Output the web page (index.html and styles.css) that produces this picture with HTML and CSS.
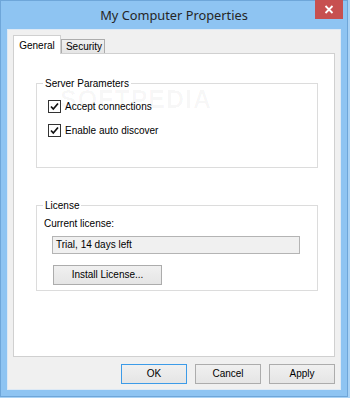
FILE: index.html
```html
<!DOCTYPE html>
<html>
<head>
<meta charset="utf-8">
<link rel="stylesheet" href="styles.css">
</head>
<body>
<div class="window">
  <div class="titlebar">
    <span class="title">My Computer Properties</span>
    <div class="close"><svg width="10" height="9" viewBox="0 0 10 9"><path d="M1.5 1 L8.5 8 M8.5 1 L1.5 8" stroke="#fff" stroke-width="1.8"/></svg></div>
  </div>
  <div class="client">
    <div class="tabs">
      <div class="tab active">General</div>
      <div class="tab">Security</div>
    </div>
    <div class="panel">
      <div class="watermark">SOFTPEDIA<sup>®</sup></div>
      <div class="group group-server">
        <div class="legend">Server Parameters</div>
        <div class="check-row">
          <span class="checkbox"><svg width="11" height="11" viewBox="0 0 11 11"><path d="M2 5.5 L4.3 8 L9 2.5" fill="none" stroke="#111" stroke-width="1.7"/></svg></span>
          <span class="check-label">Accept connections</span>
        </div>
        <div class="check-row second">
          <span class="checkbox"><svg width="11" height="11" viewBox="0 0 11 11"><path d="M2 5.5 L4.3 8 L9 2.5" fill="none" stroke="#111" stroke-width="1.7"/></svg></span>
          <span class="check-label">Enable auto discover</span>
        </div>
      </div>
      <div class="group group-license">
        <div class="legend">License</div>
        <div class="field-label">Current license:</div>
        <div class="textbox">Trial, 14 days left</div>
        <div class="btn install">Install License...</div>
      </div>
    </div>
    <div class="buttons">
      <div class="btn dlg default">OK</div>
      <div class="btn dlg">Cancel</div>
      <div class="btn dlg">Apply</div>
    </div>
  </div>
</div>
</body>
</html>
```

FILE: styles.css
```css
html, body {
  margin: 0;
  padding: 0;
  background: #a9d2f5;
  width: 350px;
  height: 398px;
  overflow: hidden;
}
.window {
  width: 346px;
  height: 395px;
  border: 1px solid #6ea6d9;
  background: #8ec4f2;
  font-family: "Liberation Sans", Arial, sans-serif;
  font-size: 10px;
  color: #000;
}
.titlebar {
  height: 28px;
  display: flex;
  align-items: flex-start;
  justify-content: center;
  position: relative;
}
.title {
  font-family: "Noto Sans", "Open Sans", sans-serif;
  font-size: 12.8px;
  line-height: 16px;
  margin-top: 6px;
  color: #262626;
}
.close {
  position: absolute;
  left: 314px;
  top: -1px;
  width: 28px;
  height: 19px;
  background: #c75050;
  display: flex;
  align-items: center;
  justify-content: center;
}
.client {
  margin-left: 6px;
  width: 322px;
  height: 349px;
  border: 1px solid #dde9f5;
  background: #f0f0f0;
  padding: 5px 5px 5px 5px;
}
.tabs {
  display: flex;
  height: 19px;
  margin-bottom: -1px;
  position: relative;
  z-index: 1;
}
.tab {
  box-sizing: border-box;
  text-align: center;
}
.tab.active {
  width: 48px;
  height: 19px;
  background: #fff;
  border: 1px solid #d0d0d0;
  border-bottom: none;
  line-height: 17px;
  padding-top: 1px;
}
.tab:not(.active) {
  align-self: flex-end;
  margin-bottom: 1px;
  width: 44px;
  height: 14px;
  background: linear-gradient(#f0f0f0, #e5e5e5);
  border: 1px solid #acacac;
  border-bottom: none;
  line-height: 13px;
  padding-left: 2px;
}
.panel {
  position: relative;
  box-sizing: border-box;
  width: 322px;
  height: 304px;
  background: #fff;
  border: 1px solid #d0d0d0;
  padding-top: 29px;
}
.watermark {
  position: absolute;
  left: 46px;
  top: 31px;
  font-family: "Liberation Sans", Arial, sans-serif;
  font-weight: bold;
  font-size: 25px;
  letter-spacing: 1px;
  color: rgba(0, 0, 0, 0.03);
  pointer-events: none;
}
.watermark sup {
  font-size: 8px;
}
.group {
  box-sizing: border-box;
  margin-left: 22px;
  width: 282px;
  border: 1px solid #dcdcdc;
}
.legend {
  width: fit-content;
  margin-top: -7px;
  margin-left: 6px;
  padding: 0 2px;
  background: #fff;
  line-height: 13px;
  position: relative;
}
.group-server {
  height: 85px;
}
.check-row {
  display: flex;
  align-items: center;
  height: 13px;
  margin-top: 10px;
  margin-left: 11px;
  line-height: 13px;
}
.check-row.second {
  margin-top: 11px;
}
.checkbox {
  box-sizing: border-box;
  width: 13px;
  height: 13px;
  border: 1px solid #333;
  background: #fff;
  display: flex;
  align-items: center;
  justify-content: center;
}
.check-label {
  margin-left: 4px;
}
.group-license {
  margin-top: 37px;
  height: 86px;
}
.field-label {
  margin-left: 7px;
  margin-top: 5px;
  line-height: 13px;
}
.textbox {
  box-sizing: border-box;
  margin-top: 6px;
  margin-left: 15px;
  width: 248px;
  height: 18px;
  border: 1px solid #b4b4b4;
  background: #f0f0f0;
  padding-left: 3px;
  line-height: 16px;
}
.btn {
  box-sizing: border-box;
  height: 20px;
  border: 1px solid #acacac;
  background: linear-gradient(#f0f0f0, #e5e5e5);
  text-align: center;
  line-height: 18px;
}
.install {
  margin-top: 11px;
  margin-left: 16px;
  width: 109px;
}
.buttons {
  display: flex;
  justify-content: flex-end;
  gap: 8px;
  margin-top: 7px;
}
.dlg {
  width: 66px;
}
.dlg.default {
  border-color: #3c9be8;
}
```
